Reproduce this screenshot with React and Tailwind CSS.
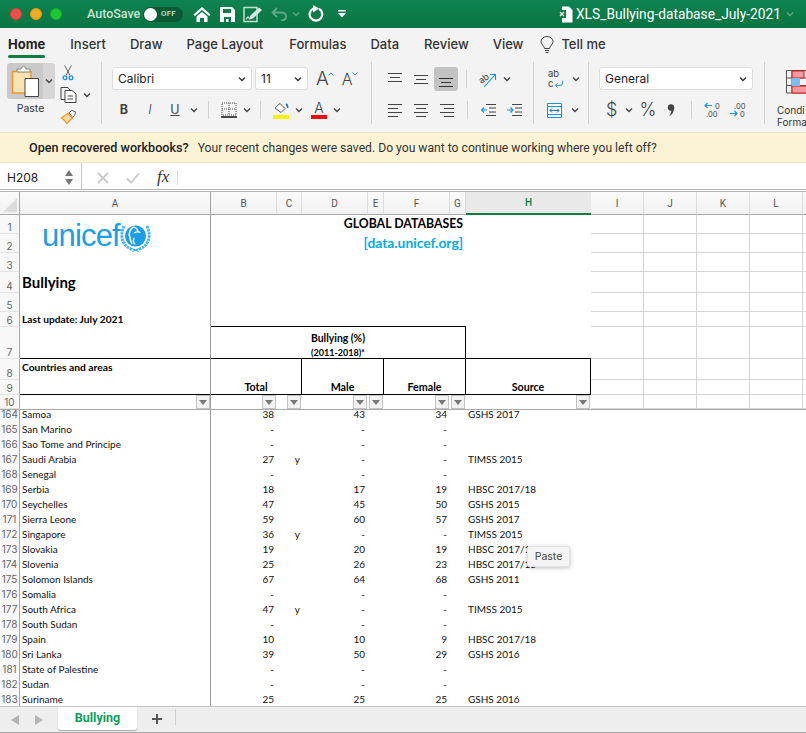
import React from "react";

const COLS = "grid-cols-[20px_191px_66px_25px_66px_16px_66px_16px_125px_53px_53px_53px_53px_3px]";

const rows = [
  ["165", "San Marino", "-", "", "-", "-", ""],
  ["166", "Sao Tome and Principe", "-", "", "-", "-", ""],
  ["167", "Saudi Arabia", "27", "y", "-", "-", "TIMSS 2015"],
  ["168", "Senegal", "-", "", "-", "-", ""],
  ["169", "Serbia", "18", "", "17", "19", "HBSC 2017/18"],
  ["170", "Seychelles", "47", "", "45", "50", "GSHS 2015"],
  ["171", "Sierra Leone", "59", "", "60", "57", "GSHS 2017"],
  ["172", "Singapore", "36", "y", "-", "-", "TIMSS 2015"],
  ["173", "Slovakia", "19", "", "20", "19", "HBSC 2017/18"],
  ["174", "Slovenia", "25", "", "26", "23", "HBSC 2017/18"],
  ["175", "Solomon Islands", "67", "", "64", "68", "GSHS 2011"],
  ["176", "Somalia", "-", "", "-", "-", ""],
  ["177", "South Africa", "47", "y", "-", "-", "TIMSS 2015"],
  ["178", "South Sudan", "-", "", "-", "-", ""],
  ["179", "Spain", "10", "", "10", "9", "HBSC 2017/18"],
  ["180", "Sri Lanka", "39", "", "50", "29", "GSHS 2016"],
  ["181", "State of Palestine", "-", "", "-", "-", ""],
  ["182", "Sudan", "-", "", "-", "-", ""],
  ["183", "Suriname", "25", "", "25", "25", "GSHS 2016"],
];

const headerRows = ["1", "2", "3", "4", "5", "6", "7", "8", "9", "10"];
const rowStart = ["row-[1]", "row-[2]", "row-[3]", "row-[4]", "row-[5]", "row-[6]", "row-[7]", "row-[8]", "row-[9]", "row-[10]"];

const Chev = ({ className = "", color = "#444" }) => (
  <svg width="8" height="6" viewBox="0 0 8 6" className={`shrink-0 ${className}`}>
    <path d="M1 1.500 4 4.500 7 1.500" fill="none" stroke={color} strokeWidth="1.400" />
  </svg>
);

const Sep = ({ className = "" }) => <div className={`w-px h-[18px] bg-[#d2d2d2] shrink-0 ${className}`} />;

const Lines = ({ kind, selected }) => {
  const sets = {
    top: [[1, 15, 3], [3, 13, 7], [1, 15, 11]],
    mid: [[1, 15, 5], [3, 13, 9], [1, 15, 13]],
    bot: [[1, 15, 8], [3, 13, 12], [1, 15, 16]],
    left: [[1, 15, 3], [1, 11, 7], [1, 15, 11], [1, 11, 15]],
    center: [[1, 15, 3], [3, 13, 7], [1, 15, 11], [3, 13, 15]],
    right: [[1, 15, 3], [5, 15, 7], [1, 15, 11], [5, 15, 15]],
  };
  return (
    <svg width="16" height="18" viewBox="0 0 16 18" className="shrink-0">
      {sets[kind].map(([a, b, y], i) => (
        <path key={i} d={`M${a} ${y + 0.5}H${b}`} stroke={selected ? "#333" : "#444"} strokeWidth="1" />
      ))}
    </svg>
  );
};

const FilterBtn = () => (
  <div className="w-[14px] h-[14px] bg-[#f2f2f2] border border-[#c4c4c4] flex items-center justify-center">
    <svg width="8" height="5" viewBox="0 0 8 5">
      <path d="M0 0H8L4 5Z" fill="#777" />
    </svg>
  </div>
);

function TitleBar() {
  return (
    <div className="h-[28px] bg-[#0b7b47] bg-gradient-to-b from-[#0e8450] to-[#0a7442] flex items-center shrink-0 [&>*]:shrink-0 [font-family:Roboto,sans-serif]">
      <div className="ml-[10px] w-[12px] h-[12px] rounded-full bg-[#ee4f48] border border-[#d8423c]" />
      <div className="ml-[8px] w-[12px] h-[12px] rounded-full bg-[#f6aa1f] border border-[#dd9a1c]" />
      <div className="ml-[8px] w-[12px] h-[12px] rounded-full bg-[#1fc737] border border-[#1bab30]" />
      <span className="ml-[25px] text-[12.500px] font-medium text-[#c9e4d6] w-[56px]">AutoSave</span>
      <div className="w-[40px] h-[15px] rounded-full bg-[#0a5a36] flex items-center">
        <div className="w-[13px] h-[13px] rounded-full bg-white ml-px" />
        <span className="ml-[4px] text-[8px] font-medium tracking-wide text-[#c9e4d6]">OFF</span>
      </div>
      {/* quick access icons */}
      <svg width="18" height="17" viewBox="0 0 18 17" className="ml-[10px]">
        <path d="M9 1 0.500 8.500 2 10 9 4l7 6 1.500-1.500Z" fill="#fff" />
        <path d="M3.500 10.500 9 6l5.500 4.500V16h-3.500v-4H7v4H3.500Z" fill="#fff" />
      </svg>
      <svg width="15" height="15" viewBox="0 0 15 15" className="ml-[9px]">
        <path d="M1 0H12L15 3V15H0V1Q0 0 1 0Z" fill="#fff" />
        <path d="M3 2H11V6H3Z" fill="#0b7b47" />
        <path d="M4 10H11V15H8.500V12H6V15H4Z" fill="#0b7b47" />
      </svg>
      <svg width="20" height="17" viewBox="0 0 20 17" className="ml-[8px]">
        <path d="M1 1.500H14V15.500H1Z" fill="none" stroke="#bfe0cf" strokeWidth="1.500" />
        <path d="M3 13 5 11l2 2" fill="none" stroke="#bfe0cf" strokeWidth="1.300" />
        <path d="M7 10 16 1.500 19 4 10 12.500 6.500 13.500Z" fill="#d5ebdf" />
      </svg>
      <svg width="16" height="14" viewBox="0 0 16 14" className="ml-[8px]">
        <path d="M6 1 1.500 5.500 6 10M2 5.500H10Q15 5.500 15 9.500T10 13.500" fill="none" stroke="#5fa884" strokeWidth="1.800" />
      </svg>
      <Chev color="#5fa884" className="ml-[5px]" />
      <svg width="16" height="18" viewBox="0 0 16 18" className="ml-[8px]">
        <path d="M5.500 3.500A6.300 6.300 0 1 0 11 3.800" fill="none" stroke="#fff" strokeWidth="2.200" />
        <path d="M5 0V7.500L11 3.500Z" fill="#fff" />
      </svg>
      <svg width="8" height="8" viewBox="0 0 8 8" className="ml-[14px]">
        <path d="M0 0H8V1.500H0Z" fill="#fff" />
        <path d="M0 3H8L4 7.500Z" fill="#fff" />
      </svg>
      <svg width="15" height="17" viewBox="0 0 15 17" className="ml-[212px]">
        <path d="M4 0.500H11L14.500 4V16.500H4Z" fill="#fff" />
        <path d="M0 4H8V12H0Z" fill="#107c41" />
        <path d="M2 6 6 10M6 6 2 10" stroke="#fff" strokeWidth="1.200" />
      </svg>
      <span className="ml-[3px] text-[13.750px] text-white whitespace-nowrap">XLS_Bullying-database_July-2021</span>
      <Chev color="#5fa884" className="ml-[5px]" />
    </div>
  );
}

function TabsRow() {
  const tabs = [
    ["Insert", "ml-[25px]"],
    ["Draw", "ml-[24px]"],
    ["Page Layout", "ml-[24px]"],
    ["Formulas", "ml-[26px]"],
    ["Data", "ml-[24px]"],
    ["Review", "ml-[25px]"],
    ["View", "ml-[24px]"],
  ];
  return (
    <div className="h-[34px] flex items-center pl-[8px] text-[13px] text-[#333] font-medium shrink-0">
      <div className="relative">
        <span className="font-bold text-[#222]">Home</span>
        <div className="absolute left-0 right-0 top-[20px] h-[3px] rounded-full bg-[#107c41]" />
      </div>
      {tabs.map(([t, m]) => (
        <span key={t} className={m}>{t}</span>
      ))}
      <svg width="14" height="18" viewBox="0 0 14 18" className="ml-[17px]">
        <path d="M4.500 12.500C4 9.500 1 8.500 1 5.500A6 5 0 0 1 13 5.500C13 8.500 10 9.500 9.500 12.500ZM5 14.500H9M5.500 16.500H8.500" fill="none" stroke="#444" strokeWidth="1" />
      </svg>
      <span className="ml-[7px]">Tell me</span>
    </div>
  );
}

function Ribbon() {
  return (
    <div className="h-[70px] flex items-start shrink-0">
      {/* clipboard */}
      <div className="w-[102px] h-[62px] flex border-r border-[#d2d2d2] shrink-0">
        <div className="ml-[7px] w-[48px]">
          <div className="h-[36px] mt-px flex rounded-[3px] overflow-hidden">
            <div className="w-[36px] bg-[#c9c9c9] flex items-center justify-center">
              <svg width="28" height="31" viewBox="0 0 28 31">
                <path d="M1.500 5.500H20V27H1.500Z" fill="#fbe3b4" stroke="#f29423" strokeWidth="1.500" />
                <path d="M6 6V3H10Q10.500 0.500 12.500 0.500T15 3H19V6Z" fill="#fff" stroke="#888" />
                <path d="M14 12.500H27.500V30.500H14Z" fill="#fff" stroke="#444" />
              </svg>
            </div>
            <div className="w-[12px] bg-[#d6d6d6] flex items-center justify-center">
              <Chev />
            </div>
          </div>
          <div className="text-[10.500px] text-[#333] text-center mt-[2px] pr-px">Paste</div>
        </div>
        <div className="ml-[5px] flex flex-col items-start">
          <svg width="12" height="17" viewBox="0 0 12 17" className="mt-[3px] ml-[2px]">
            <path d="M2.500 0.500 8 11M9.500 0.500 4 11" stroke="#555" strokeWidth="1" fill="none" />
            <circle cx="2.800" cy="13.500" r="2" fill="none" stroke="#1a8fdc" strokeWidth="1.400" />
            <circle cx="9.200" cy="13.500" r="2" fill="none" stroke="#1a8fdc" strokeWidth="1.400" />
          </svg>
          <div className="flex items-center mt-[6px]">
            <svg width="17" height="16" viewBox="0 0 17 16">
              <path d="M5 12.500H1V0.500H8L10 3" fill="none" stroke="#444" />
              <path d="M5 3.500H12L16 7V15.500H5Z" fill="#fff" stroke="#444" />
              <path d="M7.500 9H13M7.500 12H13" stroke="#444" />
            </svg>
            <Chev className="ml-[6px]" />
          </div>
          <svg width="17" height="16" viewBox="0 0 17 16" className="mt-[6px]">
            <path d="M9 4 12 1.500 16 3 15 7 13 9Z" fill="#fff" stroke="#555" />
            <path d="M1 9.500 8 4.500 12.500 9.500 6.500 15.500Q4 11 1 9.500Z" fill="#fbd9a4" stroke="#f29423" strokeWidth="1.300" />
          </svg>
        </div>
      </div>

      {/* font */}
      <div className="w-[270px] h-[62px] border-r border-[#d2d2d2] shrink-0">
        <div className="flex items-center mt-[5px] h-[23px]">
          <div className="ml-[10px] w-[140px] h-[23px] bg-white border border-[#dcdcdc] rounded-[3px] flex items-center justify-between pt-px pl-[5px] pr-[5px] text-[12px] text-[#222]">
            Calibri <Chev color="#333" />
          </div>
          <div className="ml-[3px] w-[53px] h-[23px] bg-white border border-[#dcdcdc] rounded-[3px] flex items-center justify-between pt-px pl-[5px] pr-[5px] text-[12px] text-[#222]">
            11 <Chev color="#333" />
          </div>
          <span className="ml-[8px] text-[19px] font-light text-[#444] leading-none">A</span>
          <svg width="6" height="4" viewBox="0 0 6 4" className="mb-[10px] -ml-px"><path d="M0.500 3.500 3 1 5.500 3.500" fill="none" stroke="#1a8fdc" /></svg>
          <span className="ml-[8px] text-[16px] font-light text-[#444] leading-none">A</span>
          <svg width="6" height="4" viewBox="0 0 6 4" className="mb-[10px] -ml-px"><path d="M0.500 0.500 3 3 5.500 0.500" fill="none" stroke="#1a8fdc" /></svg>
        </div>
        <div className="flex items-center mt-[9px] h-[22px] text-[#444]">
          <span className="ml-[17px] w-[10px] text-center font-bold text-[12.500px]">B</span>
          <span className="ml-[16px] w-[10px] text-center italic font-light text-[13px]">I</span>
          <span className="ml-[15px] w-[10px] text-center underline text-[12.500px]">U</span>
          <Chev className="ml-[10px]" />
          <Sep className="ml-[10px]" />
          <svg width="16" height="16" viewBox="0 0 16 16" className="ml-[12px]">
            <path d="M1 1H15V13H1ZM8 1V13M1 7H15" fill="none" stroke="#555" strokeWidth="1" strokeDasharray="1 1" />
            <path d="M0 15H16" stroke="#111" strokeWidth="1.500" />
          </svg>
          <Chev className="ml-[6px]" />
          <Sep className="ml-[9px]" />
          <div className="ml-[12px] w-[16px] flex flex-col items-center">
            <svg width="16" height="12" viewBox="0 0 16 12">
              <path d="M2 6 7 1.500 12 6.500 8 10.500Z" fill="#fff" stroke="#555" />
              <path d="M13 2Q15 3 14.500 6" fill="none" stroke="#1a6fb5" strokeWidth="1.500" />
            </svg>
            <div className="w-[16px] h-[4px] bg-[#fff200] mt-px" />
          </div>
          <Chev className="ml-[6px]" />
          <div className="ml-[8px] w-[16px] flex flex-col items-center">
            <span className="text-[14px] font-light leading-[12px]">A</span>
            <div className="w-[16px] h-[4px] bg-[#f00] mt-px" />
          </div>
          <Chev className="ml-[6px]" />
        </div>
      </div>

      {/* alignment */}
      <div className="w-[162px] h-[62px] border-r border-[#d2d2d2] shrink-0">
        <div className="flex items-center mt-[5px] h-[24px]">
          <div className="ml-[15px]"><Lines kind="top" /></div>
          <div className="ml-[10px]"><Lines kind="mid" /></div>
          <div className="ml-[5px] w-[24px] h-[24px] rounded-[3px] bg-[#c2c2c2] flex items-center justify-center"><Lines kind="bot" selected /></div>
          <Sep className="ml-[8px]" />
          <svg width="18" height="17" viewBox="0 0 18 17" className="ml-[12px]">
            <text x="0" y="10" fontSize="9" fill="#444" transform="rotate(-35 6 8)" fontFamily="Inter, sans-serif">ab</text>
            <path d="M5 16 16 4M11 3.500H16.500V9" fill="none" stroke="#1a8fdc" strokeWidth="1.100" />
          </svg>
          <Chev className="ml-[6px]" />
        </div>
        <div className="flex items-center mt-[8px] h-[22px]">
          <div className="ml-[15px]"><Lines kind="left" /></div>
          <div className="ml-[10px]"><Lines kind="center" /></div>
          <div className="ml-[10px]"><Lines kind="right" /></div>
          <Sep className="ml-[12px]" />
          <svg width="15" height="14" viewBox="0 0 15 14" className="ml-[13px]">
            <path d="M5 1.500H15M8 5H15M8 9H15M5 12.500H15" stroke="#444" />
            <path d="M6 7H0.500M3 4.500 0.500 7 3 9.500" fill="none" stroke="#1a8fdc" strokeWidth="1.200" />
          </svg>
          <svg width="15" height="14" viewBox="0 0 15 14" className="ml-[11px]">
            <path d="M5 1.500H15M8 5H15M8 9H15M5 12.500H15" stroke="#444" />
            <path d="M0 7H6M3.500 4.500 6 7 3.500 9.500" fill="none" stroke="#1a8fdc" strokeWidth="1.200" />
          </svg>
        </div>
      </div>

      {/* wrap + merge */}
      <div className="w-[55px] h-[62px] border-r border-[#d2d2d2] shrink-0">
        <div className="flex items-center mt-[5px] h-[24px]">
          <div className="ml-[14px] w-[16px] text-[9.500px] leading-[10px] text-[#444]">
            <div>ab</div>
            <div className="flex items-center">c
              <svg width="11" height="9" viewBox="0 0 11 9" className="ml-px">
                <path d="M9 0.500H10V3Q10 5.500 7 5.500H2M4 3 1.500 5.500 4 8" fill="none" stroke="#1a8fdc" strokeWidth="1.100" />
              </svg>
            </div>
          </div>
          <Chev className="ml-[8px]" />
        </div>
        <div className="flex items-center mt-[8px] h-[22px]">
          <svg width="15" height="15" viewBox="0 0 15 15" className="ml-[13px]">
            <path d="M0.500 0.500H14.500V14.500H0.500Z" fill="#fff" stroke="#1a8fdc" />
            <path d="M0.500 3.500H14.500M0.500 11.500H14.500" stroke="#1a8fdc" />
            <path d="M3 7.500H12M5 5.500 3 7.500 5 9.500M10 5.500 12 7.500 10 9.500" fill="none" stroke="#1a6fb5" />
          </svg>
          <Chev className="ml-[9px]" />
        </div>
      </div>

      {/* number */}
      <div className="w-[176px] h-[62px] border-r border-[#d2d2d2] shrink-0">
        <div className="flex items-center mt-[5px] h-[23px]">
          <div className="ml-[10px] w-[154px] h-[23px] bg-white border border-[#dcdcdc] rounded-[3px] flex items-center justify-between pt-px pl-[5px] pr-[5px] text-[12px] text-[#222]">
            General <Chev color="#333" />
          </div>
        </div>
        <div className="flex items-center mt-[9px] h-[22px] text-[#444]">
          <span className="ml-[17px] w-[10px] text-center text-[18px] font-light leading-[22px]">$</span>
          <Chev className="ml-[9px]" />
          <span className="ml-[6px] w-[18px] text-center text-[18px] font-light leading-[22px]">%</span>
          <svg width="8" height="13" viewBox="0 0 8 13" className="ml-[10px]">
            <circle cx="4" cy="3.500" r="3.200" fill="#444" />
            <path d="M7 3.500Q7.500 9 2 12.500 5 8 4 6Z" fill="#444" />
          </svg>
          <Sep className="ml-[16px]" />
          <svg width="17" height="16" viewBox="0 0 17 16" className="ml-[12px]">
            <path d="M8 3.500H1M3.500 1 1 3.500 3.500 6" fill="none" stroke="#1a8fdc" strokeWidth="1.200" />
            <text x="11" y="7" fontSize="7.500" fill="#444" fontFamily="Inter, sans-serif">0</text>
            <text x="2" y="15" fontSize="7.500" fill="#444" fontFamily="Inter, sans-serif">.00</text>
          </svg>
          <svg width="17" height="16" viewBox="0 0 17 16" className="ml-[9px]">
            <text x="4" y="7" fontSize="7.500" fill="#444" fontFamily="Inter, sans-serif">.00</text>
            <path d="M0 11.500H7M4.500 9 7 11.500 4.500 14" fill="none" stroke="#1a8fdc" strokeWidth="1.200" />
            <text x="10" y="15" fontSize="7.500" fill="#444" fontFamily="Inter, sans-serif">0</text>
          </svg>
        </div>
      </div>

      {/* conditional formatting, runs off the window */}
      <div className="w-[41px] overflow-hidden shrink-0">
        <svg width="30" height="24" viewBox="0 0 30 24" className="mt-[8px] ml-[21px]">
          <path d="M0.500 0.500H30M0.500 8H30M0.500 15.500H30M0.500 23H30M0.500 0.500V23M6 0.500V23" stroke="#555" fill="none" />
          <path d="M6 1H18V8H6ZM6 16H30V23H6Z" fill="#f59a9e" stroke="#d11" />
          <path d="M6 8H14V16H6Z" fill="#7cbcf0" />
        </svg>
        <div className="text-[10px] leading-[12px] text-[#333] mt-[10px] ml-[12px] whitespace-nowrap">
          Condi<br />Forma
        </div>
      </div>
    </div>
  );
}

function Banner() {
  return (
    <div className="h-[31px] bg-[#fcf3d5] border-t border-b border-[#e9e2c8] flex items-center pl-[29px] pt-[2px] text-[#222] whitespace-nowrap shrink-0 [font-family:Roboto,sans-serif]">
      <span className="font-medium text-[12.600px]">Open recovered workbooks?</span>
      <span className="ml-[9px] text-[12.150px] text-[#333]">Your recent changes were saved. Do you want to continue working where you left off?</span>
    </div>
  );
}

function FormulaBar() {
  return (
    <div className="h-[29px] flex flex-col shrink-0">
      <div className="h-[27px] bg-white border-b border-[#b4b4b4] flex items-center">
        <div className="w-[82px] h-full flex items-center justify-between border-r border-[#c8c8c8] pl-[7px] pr-[8px] pt-[3px] text-[12px] text-[#222]">
          H208
          <div className="flex flex-col gap-[3px]">
            <svg width="8" height="6" viewBox="0 0 8 6"><path d="M4 0 8 6H0Z" fill="#777" /></svg>
            <svg width="8" height="6" viewBox="0 0 8 6"><path d="M4 6 8 0H0Z" fill="#777" /></svg>
          </div>
        </div>
        <svg width="12" height="12" viewBox="0 0 12 12" className="ml-[15px] mt-[3px]">
          <path d="M1 1 11 11M11 1 1 11" stroke="#c8c8c8" strokeWidth="1.800" />
        </svg>
        <svg width="14" height="12" viewBox="0 0 14 12" className="ml-[17px] mt-[3px]">
          <path d="M1 6.500 5 10.500 13 1.500" fill="none" stroke="#c8c8c8" strokeWidth="1.800" />
        </svg>
        <span className="ml-[17px] w-[16px] mt-[2px] italic text-[17px] text-[#333] [font-family:'Liberation_Serif',serif]">fx</span>
        <div className="ml-[4px] mt-[2px] w-px h-[15px] bg-[#d8d8d8]" />
      </div>
      <div className="h-[2px] bg-white border-b border-[#b4b4b4]" />
    </div>
  );
}

function UnicefLogo() {
  return (
    <div className="flex items-start pl-[22px] pt-[6px] h-full text-[#1c9ee6]">
      <span className="text-[31px] leading-[30px] tracking-[-0.8px] [font-family:'Liberation_Sans',sans-serif]">unicef</span>
      <svg width="31" height="30" viewBox="0 0 31 30" className="mt-px shrink-0">
        {/* globe */}
        <circle cx="15.500" cy="14" r="10.500" fill="#1c9ee6" />
        {/* the gap around mother and child heads */}
        <path d="M13 5Q8.500 9 9.500 14T12 22" fill="none" stroke="#fff" strokeWidth="1.600" />
        <path d="M13 5Q17.500 6 18 10M14 16Q12.500 20 15 22.500" fill="none" stroke="#d7effc" strokeWidth="1.400" />
        <path d="M14 11Q17 9 20.500 10.500" fill="none" stroke="#fff" strokeWidth="1.300" />
        {/* wreath */}
        <path d="M4 4Q0.500 12 2.800 19 6 26 13 27.500" fill="none" stroke="#4db3ec" strokeWidth="3" strokeDasharray="2.400 0.800" />
        <path d="M27 4Q30.500 12 28.200 19 25 26 18 27.500" fill="none" stroke="#4db3ec" strokeWidth="3" strokeDasharray="2.400 0.800" />
        <path d="M12 26.500 18.500 29.500M19 26.500 12.500 29.500" stroke="#1c9ee6" strokeWidth="1" />
      </svg>
    </div>
  );
}

function SheetHeader() {
  const letters = ["A", "B", "C", "D", "E", "F", "G"];
  return (
    <>
      {/* column letters */}
      <div className={`grid ${COLS} h-[23px] shrink-0 text-[10px] text-[#555] bg-gradient-to-b from-[#fafafa] to-[#f1f1f1] [font-family:Roboto,sans-serif]`}>
        <div className="border-r border-b border-[#a8a8a8] flex items-end justify-end pr-[2px] pb-[2px]">
          <svg width="14" height="14" viewBox="0 0 14 14"><path d="M14 0V14H0Z" fill="#dcdcdc" /></svg>
        </div>
        {letters.map((l, i) => (
          <div key={l} className={`flex items-center justify-center border-b border-[#a8a8a8] border-r ${i === 0 ? "border-r-[#a0a0a0]" : "border-r-[#dcdcdc]"}`}>{l}</div>
        ))}
        <div className="flex items-center justify-center bg-[#e9e9e9] border-b-2 border-[#107c41] text-[#107c41] font-medium">H</div>
        {["I", "J", "K", "L"].map((l) => (
          <div key={l} className="flex items-center justify-center border-b border-[#a8a8a8] border-r border-r-[#dcdcdc]">{l}</div>
        ))}
        <div className="border-b border-[#a8a8a8]" />
      </div>

      {/* frozen rows 1-10 */}
      <div className={`grid ${COLS} grid-rows-[19px_19px_19px_21px_19px_15px_32px_21px_15px_14px] shrink-0 [font-family:Lato,sans-serif] text-black`}>
        {headerRows.map((n, i) => (
          <div key={n} className={`col-[1] ${rowStart[i]} bg-[#f8f8f8] border-r border-r-[#a8a8a8] border-b border-b-[#e2e2e2] flex items-end justify-center text-[10px] leading-[12px] text-[#666] [font-family:Inter,sans-serif]`}>
            {n}
          </div>
        ))}

        {/* gridlines right of the table */}
        {rowStart.map((r) => (
          <React.Fragment key={r}>
            <div className={`col-[10] ${r} border-r border-b border-[#d4d4d4]`} />
            <div className={`col-[11] ${r} border-r border-b border-[#d4d4d4]`} />
            <div className={`col-[12] ${r} border-r border-b border-[#d4d4d4]`} />
            <div className={`col-[13] ${r} border-r border-b border-[#d4d4d4]`} />
            <div className={`col-[14] ${r} border-b border-[#d4d4d4]`} />
          </React.Fragment>
        ))}

        <div className="col-[2] row-[1/4] border-r border-[#a0a0a0]"><UnicefLogo /></div>
        <div className="col-[2] row-[4] border-r border-[#a0a0a0] flex items-center pl-[2px] text-[15px] font-bold">Bullying</div>
        <div className="col-[2] row-[5] border-r border-[#a0a0a0]" />
        <div className="col-[2] row-[6] border-r border-[#a0a0a0] flex items-end pl-[2px] text-[10.200px] leading-[15px] font-bold whitespace-nowrap">Last update: July 2021</div>
        <div className="col-[2] row-[7] border-r border-[#a0a0a0]" />

        <div className="col-[3/9] row-[1] flex items-center justify-end pr-[3px] text-[12.300px] font-bold">GLOBAL DATABASES</div>
        <div className="col-[3/9] row-[2] flex items-center justify-end pr-[3px] text-[13.800px] font-bold text-[#00aeef]">[data.unicef.org]</div>
        <div className="col-[3/9] row-[6] border-b border-black" />

        <div className="col-[3/9] row-[7] border-r border-black flex flex-col items-center font-bold text-center">
          <span className="text-[10.400px] leading-[12px] mt-[5px]">Bullying (%)</span>
          <span className="text-[9px] leading-[12px] mt-[3px]">(2011-2018)*</span>
        </div>

        <div className="col-[2] row-[8/10] border-t border-b border-black border-r-[#a0a0a0] border-r text-[10.300px] font-bold pl-[2px] pt-[2px] leading-[12px] -mt-px">Countries and areas</div>
        <div className="col-[3/5] row-[8/10] border-t border-b border-r border-black -mt-px flex items-end justify-center text-[10.700px] font-bold leading-[14px]">Total</div>
        <div className="col-[5/7] row-[8/10] border-t border-b border-r border-black -mt-px flex items-end justify-center text-[10.700px] font-bold leading-[14px]">Male</div>
        <div className="col-[7/9] row-[8/10] border-t border-b border-r border-black -mt-px flex items-end justify-center text-[10.700px] font-bold leading-[14px]">Female</div>
        <div className="col-[9] row-[8/10] border-t border-b border-r border-black -mt-px flex items-end justify-center text-[10.700px] font-bold leading-[14px]">Source</div>

        {/* filter buttons in row 10 */}
        <div className="col-[2] row-[10] border-r border-[#a0a0a0] flex justify-end"><FilterBtn /></div>
        <div className="col-[3] row-[10] flex justify-end pr-px"><FilterBtn /></div>
        <div className="col-[4] row-[10] flex justify-end pr-px"><FilterBtn /></div>
        <div className="col-[5] row-[10] flex justify-end pr-px"><FilterBtn /></div>
        <div className="col-[6] row-[10] flex justify-end pr-px"><FilterBtn /></div>
        <div className="col-[7] row-[10] flex justify-end pr-px"><FilterBtn /></div>
        <div className="col-[8] row-[10] flex justify-end pr-px"><FilterBtn /></div>
        <div className="col-[9] row-[10] flex justify-end pr-px"><FilterBtn /></div>
      </div>
      <div className="h-px bg-[#a8a8a8] shrink-0" />
    </>
  );
}

function DataRow({ row, className = "" }) {
  const [n, name, total, flag, male, female, source] = row;
  return (
    <div className={`grid ${COLS} h-[15px] leading-[15px] shrink-0 ${className}`}>
      <div className="bg-[#f8f8f8] border-r border-r-[#a8a8a8] border-b border-b-[#e2e2e2] text-[10px] text-center text-[#666] [font-family:Inter,sans-serif]">{n}</div>
      <div className="border-r border-[#a0a0a0] pl-[2px] whitespace-nowrap">{name}</div>
      <div className="pr-[3px] text-right">{total}</div>
      <div className="text-right pr-[2px]">{flag}</div>
      <div className="pr-[3px] text-right">{male}</div>
      <div />
      <div className="pr-[3px] text-right">{female}</div>
      <div />
      <div className="pl-[2px] whitespace-nowrap">{source}</div>
    </div>
  );
}

function SheetTabs() {
  return (
    <div className="h-[27px] bg-[#eeeeee] border-t border-[#c4c4c4] border-b border-b-[#a8a8a8] flex items-start shrink-0">
      <svg width="9" height="10" viewBox="0 0 9 10" className="ml-[11px] mt-[8px]"><path d="M8 0V10L0 5Z" fill="#b4b4b4" /></svg>
      <svg width="9" height="10" viewBox="0 0 9 10" className="ml-[14px] mt-[8px]"><path d="M1 0V10L9 5Z" fill="#b4b4b4" /></svg>
      <div className="ml-[15px] w-[79px] h-[23px] bg-white rounded-b-[3px] shadow-[0_1px_1px_rgba(0,0,0,0.3)] flex items-center justify-center text-[12.500px] font-bold text-[#0e9d58] [font-family:Roboto,sans-serif]">Bullying</div>
      <svg width="12" height="12" viewBox="0 0 12 12" className="ml-[14px] mt-[6px]"><path d="M6 1V11M1 6H11" stroke="#555" strokeWidth="2" /></svg>
      <div className="ml-[12px] w-px h-[16px] mt-[2px] bg-[#cfcfcf]" />
    </div>
  );
}

export default function App() {
  return (
    <div className="w-[806px] h-[733px] flex flex-col overflow-hidden bg-[#f3f3f3] relative [font-family:Inter,sans-serif]">
      <TitleBar />
      <TabsRow />
      <Ribbon />
      <Banner />
      <FormulaBar />
      <div className="flex-1 min-h-0 flex flex-col bg-white overflow-hidden">
        <SheetHeader />
        <div className="flex-1 min-h-0 overflow-hidden [font-family:Lato,sans-serif] text-[10px] text-[#111]">
          {/* row 164 is cut by the frozen pane */}
          <DataRow row={["164", "Samoa", "38", "", "43", "34", "GSHS 2017"]} className="-mt-[3px]" />
          {rows.map((r) => (
            <DataRow key={r[0]} row={r} />
          ))}
        </div>
      </div>
      <SheetTabs />
      {/* leftover tooltip over the sheet */}
      <div className="absolute left-[527px] top-[546px] w-[43px] h-[21px] bg-[#f4f4f4] border border-[#e2e2e2] rounded-[2px] shadow-[0_1px_4px_rgba(0,0,0,0.25)] flex items-center justify-center text-[10.500px] text-[#444]">Paste</div>
    </div>
  );
}
